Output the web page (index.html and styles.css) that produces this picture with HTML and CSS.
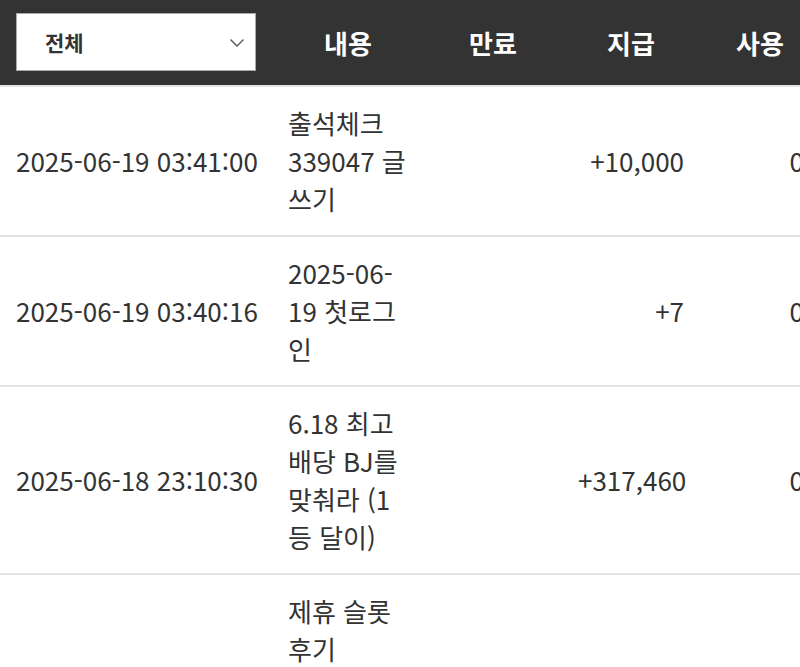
FILE: index.html
```html
<!DOCTYPE html>
<html lang="ko">
<head>
<meta charset="utf-8">
<title>포인트 내역</title>
<link rel="stylesheet" href="styles.css">
</head>
<body>
<div class="viewport">
  <table class="history">
    <colgroup>
      <col class="c-date">
      <col class="c-desc">
      <col class="c-exp">
      <col class="c-give">
      <col class="c-use">
    </colgroup>
    <thead>
      <tr>
        <th class="th-select">
          <div class="select">
            <span class="select-label">전체</span>
            <svg class="chev" width="16" height="10" viewBox="0 0 16 10"><path d="M1.5 1.5 L8 8 L14.5 1.5" fill="none" stroke="#555" stroke-width="1.4"/></svg>
          </div>
        </th>
        <th>내용</th>
        <th>만료</th>
        <th>지급</th>
        <th>사용</th>
      </tr>
    </thead>
    <tbody>
      <tr>
        <td class="date">2025-06-19 03:41:00</td>
        <td class="desc">출석체크 339047 글쓰기</td>
        <td class="exp"></td>
        <td class="num">+10,000</td>
        <td class="num">0</td>
      </tr>
      <tr>
        <td class="date">2025-06-19 03:40:16</td>
        <td class="desc">2025-06-19 첫로그인</td>
        <td class="exp"></td>
        <td class="num">+7</td>
        <td class="num">0</td>
      </tr>
      <tr>
        <td class="date">2025-06-18 23:10:30</td>
        <td class="desc">6.18 최고 배당 BJ를 맞춰라 (1등 달이)</td>
        <td class="exp"></td>
        <td class="num">+317,460</td>
        <td class="num">0</td>
      </tr>
      <tr>
        <td class="date">2025-06-18 21:05:12</td>
        <td class="desc">제휴 슬롯 후기 339012 글쓰기 이벤트 당첨</td>
        <td class="exp"></td>
        <td class="num">+5,000</td>
        <td class="num">0</td>
      </tr>
    </tbody>
  </table>
</div>
</body>
</html>
```

FILE: styles.css
```css
html, body {
  margin: 0;
  padding: 0;
  background: #ffffff;
}

.viewport {
  width: 800px;
  height: 667px;
  overflow: hidden;
}

.history {
  width: 820px;
  table-layout: fixed;
  border-collapse: collapse;
  font-family: "Noto Sans CJK KR", "Noto Sans", sans-serif;
  color: #333333;
}

.c-date { width: 272px; }
.c-desc { width: 152px; }
.c-exp { width: 138px; }
.c-give { width: 138px; }
.c-use { width: 120px; }

.history thead tr {
  background: #333333;
  border-bottom: 2px solid #e3e3e3;
}

.history th {
  height: 85px;
  padding: 0;
  color: #ffffff;
  font-size: 26px;
  font-weight: 700;
  text-align: center;
  vertical-align: middle;
}

.history th.th-select {
  padding: 0 16px;
  text-align: left;
}

.select {
  height: 58px;
  margin-top: -1px;
  box-sizing: border-box;
  background: #ffffff;
  border: 1px solid #a9a9a9;
  display: flex;
  align-items: center;
  justify-content: space-between;
  padding: 0 10px 0 28px;
}

.select-label {
  color: #333333;
  font-size: 21px;
  font-weight: 700;
}

.chev {
  display: block;
  margin-top: 1px;
}

.history tbody tr {
  border-bottom: 2px solid #e3e3e3;
}

.history td {
  padding: 17px 16px 17px;
  font-size: 26px;
  line-height: 38px;
  vertical-align: middle;
}

.history td.date {
  white-space: nowrap;
}

.history td.num {
  text-align: right;
}
```
